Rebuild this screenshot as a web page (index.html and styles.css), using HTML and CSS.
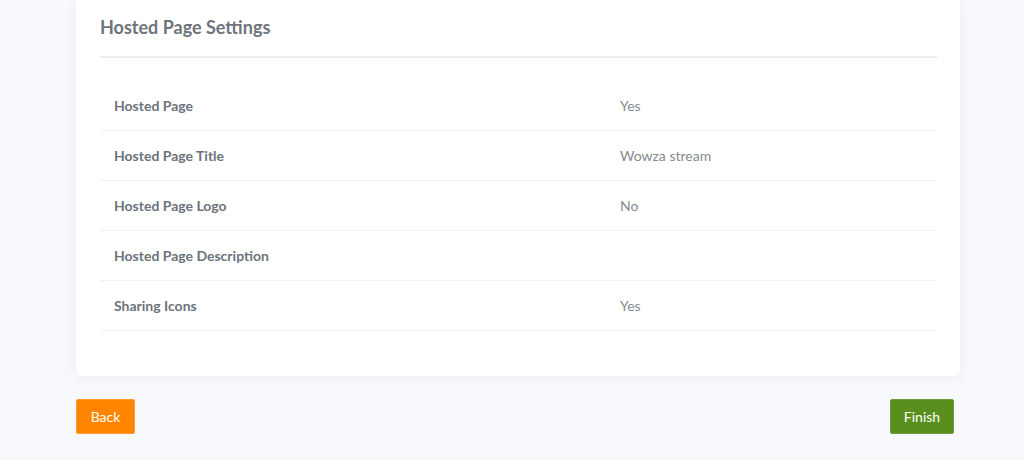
FILE: index.html
```
<!DOCTYPE html>
<html lang="en">
<head>
    <meta charset="UTF-8">
    <meta name="viewport" content="width=device-width, initial-scale=1.0">
    <title>Hosted Page Settings</title>
    <link rel="stylesheet" href="styles.css">
</head>
<body>
    <div class="wrapper">
        <div class="card">
            <h2 class="card-title">Hosted Page Settings</h2>
            <table class="settings">
                <tbody>
                    <tr>
                        <td class="label">Hosted Page</td>
                        <td>Yes</td>
                    </tr>
                    <tr>
                        <td class="label">Hosted Page Title</td>
                        <td>Wowza stream</td>
                    </tr>
                    <tr>
                        <td class="label">Hosted Page Logo</td>
                        <td>No</td>
                    </tr>
                    <tr>
                        <td class="label">Hosted Page Description</td>
                        <td></td>
                    </tr>
                    <tr>
                        <td class="label">Sharing Icons</td>
                        <td>Yes</td>
                    </tr>
                </tbody>
            </table>
        </div>
        <div class="actions">
            <button class="btn btn-back">Back</button>
            <button class="btn btn-finish">Finish</button>
        </div>
    </div>
</body>
</html>
```

FILE: styles.css
```
body{
    font-family: Lato, "Open Sans", sans-serif;
    margin: 0;
    background-color: #f8f9fd;
}
.wrapper{
    width: 884px;
    margin-left: 76px;
}
.card{
    background-color: #fff;
    border-radius: 0 0 5px 5px;
    box-shadow: 0 2px 14px rgba(40, 50, 90, 0.06);
    padding: 15px 23px 45px 24px;
}
.card-title{
    margin: 0;
    font-size: 18px;
    line-height: 24px;
    font-weight: 700;
    color: #6e747c;
    padding-bottom: 17px;
    border-bottom: 2px solid #eaedf1;
}
.settings{
    width: 100%;
    border-collapse: collapse;
    margin-top: 23px;
}
.settings td{
    height: 49px;
    padding: 0 14px;
    border-bottom: 1px solid #eff1f3;
    font-size: 14px;
    color: #858a91;
}
.settings td.label{
    width: 478px;
    font-weight: 700;
    color: #6c737b;
}
.actions{
    display: flex;
    justify-content: space-between;
    padding: 23px 6px 0 0;
}
.btn{
    font-family: inherit;
    font-size: 14px;
    color: #fff;
    height: 35px;
    border: 1px solid transparent;
    border-radius: 2px;
    cursor: pointer;
}
.btn-back{
    width: 59px;
    background-color: #ff8500;
    border-color: #ff9a2a;
}
.btn-finish{
    width: 64px;
    background-color: #5a8f1e;
    border-color: #6d9c39;
}
```
